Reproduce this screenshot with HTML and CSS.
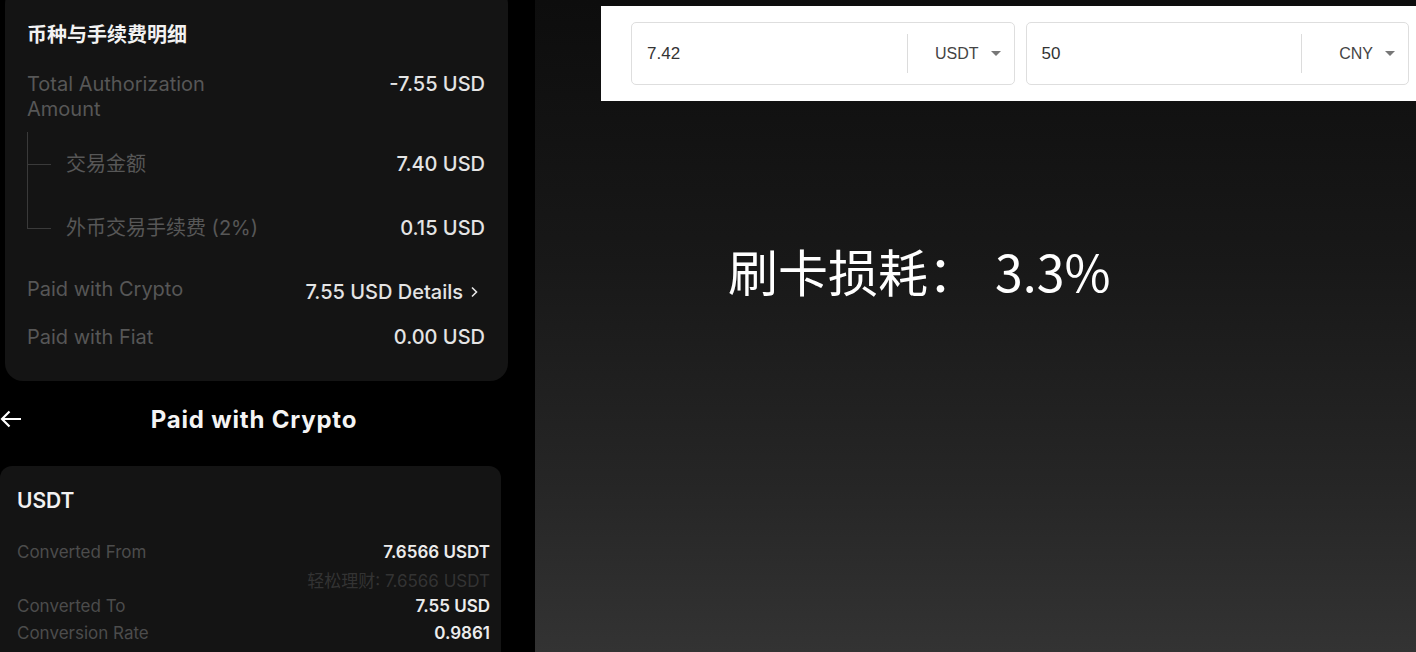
FILE: index.html
```html
<!DOCTYPE html>
<html lang="zh-CN">
<head>
  <meta charset="UTF-8">
  <title>刷卡损耗</title>
  <link rel="stylesheet" href="styles.css">
</head>
<body>
  <div class="page">
    <!-- Left: phone screenshots -->
    <div class="phone">
      <div class="card fee-card">
        <h3 class="card-title">币种与手续费明细</h3>

        <div class="row row-top">
          <span class="label label-wrap">Total Authorization Amount</span>
          <span class="value">-7.55 USD</span>
        </div>

        <div class="tree">
          <div class="row tree-row">
            <div class="branch">
              <div class="branch-top"></div>
              <div class="branch-bottom"></div>
            </div>
            <span class="label">交易金额</span>
            <span class="value">7.40 USD</span>
          </div>
          <div class="row tree-row">
            <div class="branch">
              <div class="branch-top"></div>
              <div class="branch-end"></div>
            </div>
            <span class="label">外币交易手续费 (2%)</span>
            <span class="value">0.15 USD</span>
          </div>
        </div>

        <div class="row row-crypto">
          <span class="label">Paid with Crypto</span>
          <span class="value value-link">7.55 USD Details
            <svg width="10" height="14" viewBox="0 0 10 14"><path d="M3 2.5 L7.5 7 L3 11.5" fill="none" stroke="#e6e6e6" stroke-width="1.6"/></svg>
          </span>
        </div>

        <div class="row row-fiat">
          <span class="label">Paid with Fiat</span>
          <span class="value">0.00 USD</span>
        </div>
      </div>

      <div class="nav">
        <svg class="back" width="22" height="18" viewBox="0 0 22 18"><path d="M21 9 H2 M9.5 1.5 L2 9 L9.5 16.5" fill="none" stroke="#fff" stroke-width="2.2"/></svg>
        <span class="nav-title">Paid with Crypto</span>
        <span></span>
      </div>

      <div class="card crypto-card">
        <h3 class="crypto-title">USDT</h3>
        <div class="line">
          <span class="small-label">Converted From</span>
          <span class="small-value">7.6566 USDT</span>
        </div>
        <div class="line line-sub">
          <span class="sub-value">轻松理财: 7.6566 USDT</span>
        </div>
        <div class="line">
          <span class="small-label">Converted To</span>
          <span class="small-value">7.55 USD</span>
        </div>
        <div class="line">
          <span class="small-label">Conversion Rate</span>
          <span class="small-value">0.9861</span>
        </div>
      </div>
    </div>

    <!-- Right: converter + note -->
    <div class="stage">
      <div class="converter">
        <div class="field">
          <span class="amount">7.42</span>
          <span class="divider"></span>
          <span class="currency">USDT <i class="caret"></i></span>
        </div>
        <div class="field">
          <span class="amount">50</span>
          <span class="divider"></span>
          <span class="currency">CNY <i class="caret"></i></span>
        </div>
      </div>

      <p class="loss">刷卡损耗：<span class="loss-num">3.3%</span></p>
    </div>
  </div>
</body>
</html>
```

FILE: styles.css
```css
body {
  margin: 0;
  padding: 0;
  background: #000;
  font-family: Inter, "Noto Sans CJK SC", sans-serif;
  overflow: hidden;
}
.page {
  display: flex;
  width: 1416px;
  height: 652px;
  overflow: hidden;
}

/* left column */
.phone {
  width: 535px;
  flex: none;
  background: #000;
}
.card {
  background: #141414;
}
.fee-card {
  width: 503px;
  box-sizing: border-box;
  margin: -14px 0 0 5px;
  padding: 37px 23px 25px 22px;
  border-radius: 18px;
}
.card-title {
  margin: 0;
  font-size: 20px;
  line-height: 24px;
  font-weight: 700;
  color: #f2f2f2;
}
.row {
  display: flex;
  align-items: center;
  justify-content: space-between;
}
.label {
  font-size: 20px;
  line-height: 25px;
  color: #575757;
}
.value {
  font-size: 20px;
  line-height: 25px;
  font-weight: 500;
  color: #e4e4e4;
  margin-left: auto;
}
.row-top {
  align-items: flex-start;
  margin-top: 25px;
}
.label-wrap {
  width: 210px;
}
.tree {
  margin-top: 10px;
}
.tree-row {
  height: 64px;
}
.branch {
  align-self: stretch;
  width: 24px;
  margin-right: 15px;
  display: flex;
  flex-direction: column;
}
.branch-top {
  flex: 1;
  border-left: 1px solid #3a3a3a;
  border-bottom: 1px solid #3a3a3a;
}
.branch-bottom {
  flex: 1;
  border-left: 1px solid #3a3a3a;
}
.branch-end {
  flex: 1;
}
.row-crypto {
  height: 58px;
}
.value-link {
  display: flex;
  align-items: center;
  gap: 6px;
  margin-top: 6px;
  padding-right: 6px;
}
.row-fiat {
  height: 38px;
}

.nav {
  display: grid;
  grid-template-columns: 1fr auto 1fr;
  align-items: center;
  width: 508px;
  height: 76px;
}
.back {
  display: block;
}
.nav-title {
  font-size: 24px;
  font-weight: 700;
  letter-spacing: 0.8px;
  color: #f4f4f4;
}

.crypto-card {
  width: 501px;
  box-sizing: border-box;
  margin-top: 9px;
  padding: 23px 11px 20px 17px;
  border-radius: 12px;
}
.crypto-title {
  margin: 0 0 27px;
  font-size: 21px;
  line-height: 24px;
  font-weight: 600;
  color: #f2f2f2;
}
.line {
  display: flex;
  justify-content: space-between;
  align-items: center;
  height: 24px;
  margin-bottom: 3px;
}
.line-sub {
  justify-content: flex-end;
}
.small-label {
  font-size: 17px;
  color: #4c4c4c;
}
.small-value {
  font-size: 17px;
  font-weight: 600;
  color: #ececec;
}
.sub-value {
  font-size: 17px;
  color: #333;
}

/* right column */
.stage {
  flex: 1;
  background: linear-gradient(to bottom, #0d0d0d 0%, #181818 40%, #262626 75%, #333 100%);
}
.converter {
  display: flex;
  gap: 11px;
  margin: 6px 0 0 66px;
  height: 95px;
  box-sizing: border-box;
  padding: 16px 7px 16px 30px;
  background: #fff;
}
.field {
  flex: 1;
  display: flex;
  align-items: center;
  border: 1px solid #dedede;
  border-radius: 5px;
}
.amount {
  flex: 1;
  padding-left: 15px;
  font-family: "Liberation Sans", Arial, sans-serif;
  font-size: 17px;
  color: #333;
}
.divider {
  width: 1px;
  height: 39px;
  background: #dcdcdc;
}
.currency {
  width: 106px;
  box-sizing: border-box;
  display: flex;
  align-items: center;
  justify-content: flex-end;
  gap: 12px;
  padding-right: 13px;
  font-family: "Liberation Sans", Arial, sans-serif;
  font-size: 16px;
  color: #444;
}
.caret {
  width: 0;
  height: 0;
  border-left: 5px solid transparent;
  border-right: 5px solid transparent;
  border-top: 5px solid #777;
}
.loss {
  margin: 139px 0 0 193px;
  font-family: "Noto Sans CJK SC", sans-serif;
  font-size: 50px;
  line-height: 60px;
  font-weight: 400;
  color: #fff;
}
.loss-num {
  margin-left: 17px;
}
```
